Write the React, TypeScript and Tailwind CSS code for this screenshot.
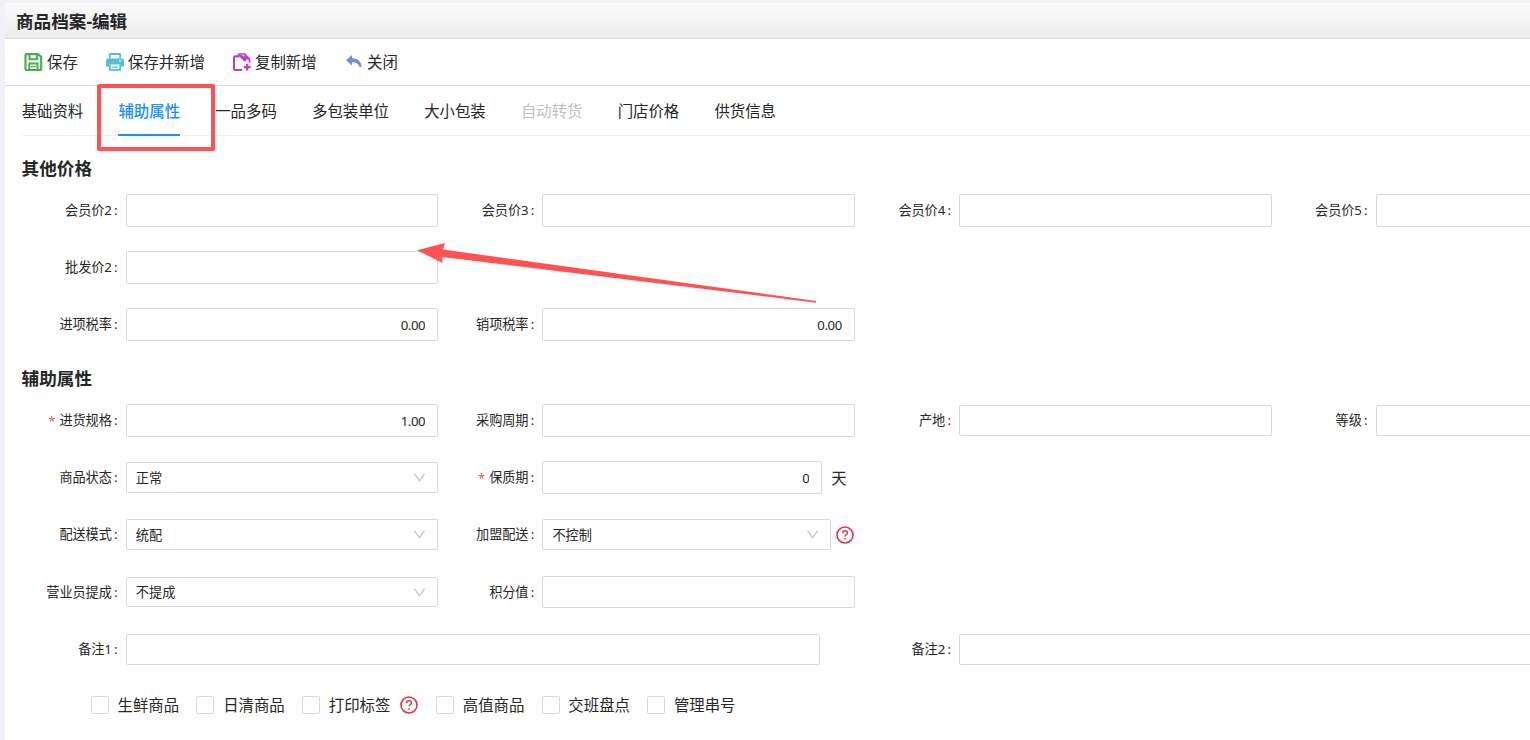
import type { ReactNode } from "react";

const SaveIcon = () => (
  <svg width="19" height="18" viewBox="0 0 19 18" fill="none" stroke="#4bae4f" strokeWidth="2.2">
    <path d="M2.5 1.100h11.500L17.200 3.800V16a1 1 0 0 1-1 1H2.500a1 1 0 0 1-1-1V2.100a1 1 0 0 1 1-1z" strokeLinejoin="round" />
    <path d="M5.500 1v5.300h7.500V1M5.300 17v-6.500h8.200V17" strokeWidth="2" />
    <path d="M7 13.500h4.800" strokeWidth="1.4" />
  </svg>
);

const PrintIcon = () => (
  <svg width="18" height="18" viewBox="0 0 18 18">
    <path d="M3.800 5.500V1h10.400v4.500" fill="none" stroke="#56c1cc" strokeWidth="1.8" strokeLinejoin="round" />
    <path d="M2 5.500h14a2 2 0 0 1 2 2v4.800a1.500 1.500 0 0 1-1.500 1.500h-1.700v-2.300H3.200v2.300H1.500A1.500 1.500 0 0 1 0 12.300V7.500a2 2 0 0 1 2-2z" fill="#56c1cc" />
    <path d="M3.800 11.500v5.300h10.400v-5.300" fill="none" stroke="#56c1cc" strokeWidth="1.8" strokeLinejoin="round" />
    <path d="M6 14.200h6" stroke="#56c1cc" strokeWidth="1.2" />
    <path d="M13 7.800h2.200" stroke="#fff" strokeWidth="1.2" />
  </svg>
);

const CopyIcon = () => (
  <svg width="18" height="18" viewBox="0 0 18 18" fill="none" stroke="#bd3cc4" strokeWidth="2">
    <path d="M5.800 3.200H2.200A1.200 1.200 0 0 0 1 4.400v11.400A1.200 1.200 0 0 0 2.200 17h7" />
    <path d="M5.500 4.500V1.800a.8.8 0 0 1 .8-.8h5.300l4.900 4.900v3.900" strokeWidth="1.7" strokeLinejoin="round" />
    <path d="M5 2l6.200 6.200h2L13 5.600 8.800 2zM10.500 1.200l1.500 5.300h4.300z" fill="#bd3cc4" stroke="none" />
    <path d="M14.200 10.800v6.800M10.800 14.200h6.800" strokeWidth="2.2" />
  </svg>
);

const BackIcon = () => (
  <svg width="16" height="13" viewBox="0 0 16 13" fill="#6f8fdb">
    <path d="M6 0v3.200c5.500.2 9.300 2.800 9.600 8.800h-2.200C12.600 8.700 10.500 7.300 6 7.200v3.400L0 5.300z" />
  </svg>
);

const HelpIcon = () => (
  <svg className="shrink-0" width="18" height="18" viewBox="0 0 18 18" fill="none" stroke="#dc3550" strokeWidth="1.6">
    <circle cx="9" cy="9" r="8" />
    <path d="M6.600 7.200c0-1.500 1-2.400 2.400-2.400s2.400.9 2.400 2.100c0 1.700-2.400 1.700-2.400 3.700" strokeWidth="1.4" />
    <path d="M9 12v1.600" />
  </svg>
);

const tabs = ["基础资料", "辅助属性", "一品多码", "多包装单位", "大小包装", "自动转货", "门店价格", "供货信息"];

const Action = ({ icon, text, className }: { icon: ReactNode; text: string; className?: string }) => (
  <button className={`flex items-center ${className ?? ""}`}>
    {icon}
    <span className="pt-[2px]">{text}</span>
  </button>
);

const Row = ({ children }: { children: ReactNode }) => <div className="flex h-[57.2px] items-center">{children}</div>;

const Field = ({
  label,
  required,
  wide,
  low,
  children,
}: {
  label: string;
  required?: boolean;
  wide?: boolean;
  low?: boolean;
  children: ReactNode;
}) => (
  <div className={`flex shrink-0 items-center ${wide ? "w-[833.3px]" : "w-[416.67px]"}`}>
    <label
      className={`flex w-[104.2px] shrink-0 items-center justify-end pr-[7.2px] text-[13.2px] leading-5 whitespace-nowrap ${
        low ? "" : "pb-[2px]"
      }`}
    >
      {required && <span className="mr-[4px] pt-[3px] text-[13px] text-[#ff4d4f]">*</span>}
      <span className="tracking-[-0.1px]">{label}</span>
      <span className="w-[6.8px] pl-[2.3px]">:</span>
    </label>
    <div className="flex flex-1 items-center">{children}</div>
  </div>
);

const Input = ({ value = "", className = "h-[33px] w-full" }: { value?: string; className?: string }) => (
  <input
    readOnly
    value={value}
    className={`rounded-[2px] border border-[#d9d9d9] bg-white px-[12px] text-right text-[13.2px] tracking-[-0.4px] outline-none ${className}`}
  />
);

const Select = ({ value, className = "h-[31px] w-full" }: { value: string; className?: string }) => (
  <div className={`flex items-center justify-between rounded-[2px] border border-[#d9d9d9] pr-[12px] pl-[9px] ${className}`}>
    <span className="text-[13.2px] leading-5">{value}</span>
    <svg width="11" height="9" viewBox="0 0 11 9" fill="none" stroke="#bfbfbf" strokeWidth="1.2">
      <path d="M.5.8l5 7 5-7" />
    </svg>
  </div>
);

const Check = ({ text }: { text: string }) => (
  <label className="flex items-center">
    <span className="size-[18px] shrink-0 rounded-[2px] border border-[#d9d9d9]" />
    <span className="w-[70px] pl-[8.8px] whitespace-nowrap">{text}</span>
  </label>
);

const Title = ({ children }: { children: ReactNode }) => (
  <h2 className="h-7 text-[17.6px] leading-7 font-bold">{children}</h2>
);

const App = () => {
  return (
    <div className="relative h-[740px] w-[1530px] overflow-hidden bg-[#f0f1f6] pt-[3px] pl-[5px] font-['Noto_Sans','Noto_Sans_CJK_SC',sans-serif] text-[15.4px] text-[#262626]">
      <div className="h-full bg-white">
        {/* Header */}
        <header className="flex h-[36px] items-center border-b border-[#d9d9d9] bg-linear-to-b from-[#fafafa] to-[#ececec] pt-[2px] pl-[11px] text-[17.6px] font-bold">
          商品档案-编辑
        </header>

        {/* Toolbar */}
        <div className="flex h-[47px] items-center border-b border-[#d9d9d9] pl-[19px]">
          <Action icon={<SaveIcon />} text="保存" className="w-[82px] gap-[4px]" />
          <Action icon={<PrintIcon />} text="保存并新增" className="w-[127px] gap-[4px]" />
          <Action icon={<CopyIcon />} text="复制新增" className="w-[113px] gap-[4px]" />
          <Action icon={<BackIcon />} text="关闭" className="gap-[5px]" />
        </div>

        <div className="pl-[16.6px]">
          {/* Tabs */}
          <nav className="flex h-[50px] gap-[35.2px] border-b border-[#f0f0f0] pl-[0.1px]">
            {tabs.map((tab) => (
              <div
                key={tab}
                className={`-mb-px h-[50px] leading-[52px] whitespace-nowrap ${
                  tab === "辅助属性"
                    ? "border-b-2 border-[#1890ff] font-medium text-[#1890ff]"
                    : tab === "自动转货"
                      ? "text-[#bfbfbf]"
                      : ""
                }`}
              >
                {tab}
              </div>
            ))}
          </nav>

          {/* Other prices */}
          <section className="pt-[18px]">
            <Title>其他价格</Title>
            <Row>
              {["会员价2", "会员价3", "会员价4", "会员价5"].map((label) => (
                <Field key={label} label={label}>
                  <Input />
                </Field>
              ))}
            </Row>
            <Row>
              <Field label="批发价2"><Input /></Field>
            </Row>
            <Row>
              <Field label="进项税率"><Input value="0.00" /></Field>
              <Field label="销项税率"><Input value="0.00" /></Field>
            </Row>
          </section>

          {/* Extra attributes */}
          <section className="pt-[10.4px]">
            <Title>辅助属性</Title>
            <Row>
              <Field label="进货规格" required><Input value="1.00" /></Field>
              <Field label="采购周期"><Input /></Field>
              <Field label="产地"><Input className="h-[31px] w-full" /></Field>
              <Field label="等级"><Input className="h-[31px] w-full" /></Field>
            </Row>
            <Row>
              <Field label="商品状态"><Select value="正常" /></Field>
              <Field label="保质期" required>
                <Input value="0" className="h-[33px] w-[280px]" />
                <span className="pt-[1px] pl-[8.8px]">天</span>
              </Field>
            </Row>
            <Row>
              <Field label="配送模式"><Select value="统配" /></Field>
              <Field label="加盟配送">
                <Select value="不控制" className="mr-[5.5px] h-[31px] w-[288.5px]" />
                <HelpIcon />
              </Field>
            </Row>
            <Row>
              <Field label="营业员提成" low><Select value="不提成" className="h-[30px] w-full" /></Field>
              <Field label="积分值" low><Input className="h-[32px] w-full" /></Field>
            </Row>
            <Row>
              <Field label="备注1" wide low><Input className="mt-px h-[31px] w-[694.4px]" /></Field>
              <Field label="备注2" wide low><Input className="mt-px h-[31px] w-full" /></Field>
            </Row>
            <div className="flex h-[55px] items-center gap-[17.6px] pl-[69.2px]">
              <Check text="生鲜商品" />
              <Check text="日清商品" />
              <div className="flex items-center gap-[10.4px]">
                <Check text="打印标签" />
                <HelpIcon />
              </div>
              <Check text="高值商品" />
              <Check text="交班盘点" />
              <Check text="管理串号" />
            </div>
          </section>
        </div>
      </div>

      {/* Callout marks over the form */}
      <div className="absolute top-[84px] left-[97px] h-[67px] w-[118px] rounded-[2px] border-4 border-[#ff5252]" />
      <svg className="absolute top-[240px] left-[415px]" width="405" height="66" viewBox="0 0 405 66" fill="#ff5252">
        <path d="M2 10.300L30 3l-2 6.500L401 61v1.700L27 17l.5 6z" />
      </svg>
    </div>
  );
};

export default App;
